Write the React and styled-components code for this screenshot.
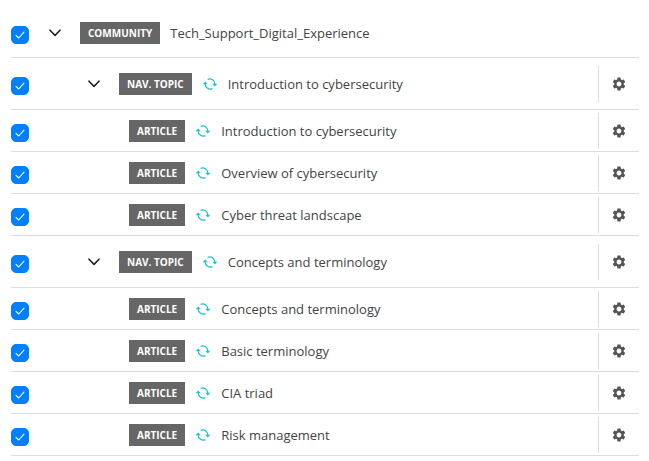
import React, { useState } from 'react';
import styled, { createGlobalStyle } from 'styled-components';
import { MdSettings } from 'react-icons/md';

const GlobalStyle = createGlobalStyle`
  body {
    margin: 0;
    background: #fff;
    color: #444;
    font-family: "Open Sans", "Noto Sans", sans-serif;
    font-size: 13px;
  }
`;

const items = [
  { id: 1, type: 'community', title: 'Tech_Support_Digital_Experience' },
  { id: 2, type: 'topic', title: 'Introduction to cybersecurity' },
  { id: 3, type: 'article', title: 'Introduction to cybersecurity' },
  { id: 4, type: 'article', title: 'Overview of cybersecurity' },
  { id: 5, type: 'article', title: 'Cyber threat landscape' },
  { id: 6, type: 'topic', title: 'Concepts and terminology' },
  { id: 7, type: 'article', title: 'Concepts and terminology' },
  { id: 8, type: 'article', title: 'Basic terminology' },
  { id: 9, type: 'article', title: 'CIA triad' },
  { id: 10, type: 'article', title: 'Risk management' },
];

const types = {
  community: { label: 'COMMUNITY', indent: 20, height: 48, expandable: true },
  topic: { label: 'NAV. TOPIC', indent: 59, height: 51, expandable: true, synced: true },
  article: { label: 'ARTICLE', indent: 100, height: 41, synced: true },
};

const Tree = styled.ul`
  list-style: none;
  margin: 0;
  padding: 9px 10px 0 11px;
`;

const Row = styled.li`
  display: flex;
  align-items: center;
  height: ${(props) => props.$height}px;
  border-bottom: 1px solid #dedede;
`;

const CheckWrap = styled.span`
  display: grid;
  place-items: center;
  flex: none;
  padding-top: 4px;

  > * {
    grid-area: 1 / 1;
  }

  svg {
    pointer-events: none;
  }
`;

const Checkbox = styled.input`
  appearance: none;
  width: 18px;
  height: 18px;
  margin: 0;
  border: 1px solid #007fff;
  border-radius: 5px;
  background: #fff;
  cursor: pointer;

  &:checked {
    background: #007fff;
  }
`;

const Content = styled.div`
  display: flex;
  align-items: center;
  flex: 1;
  min-width: 0;
  gap: 10px;
  padding-left: ${(props) => props.$indent}px;
`;

const IconButton = styled.button`
  display: grid;
  place-items: center;
  flex: none;
  padding: 0;
  border: none;
  background: none;
  color: #555;
  cursor: pointer;
`;

const Toggle = styled(IconButton)`
  width: 12px;
  height: 20px;
  margin-right: 9px;
  color: #222;
`;

const Badge = styled.span`
  flex: none;
  padding: 0 8px;
  background: #666;
  color: #fff;
  font-size: 10px;
  font-weight: 700;
  line-height: 22px;
`;

const Title = styled.label`
  line-height: 20px;
  white-space: nowrap;
`;

const Actions = styled.div`
  display: flex;
  align-items: center;
  flex: none;
  height: 36px;
  padding: 0 12px;
  border-left: 1px solid #dedede;
`;

const CheckIcon = () => (
  <svg width="12" height="10" viewBox="0 0 12 10" fill="none" stroke="#fff" strokeWidth="1.1" strokeLinecap="round" strokeLinejoin="round">
    <path d="M2 5.4 4.7 8 10 2.2" />
  </svg>
);

const ChevronIcon = () => (
  <svg width="12" height="8" viewBox="0 0 12 8" fill="none" stroke="currentColor" strokeWidth="1.6" strokeLinecap="round" strokeLinejoin="round">
    <path d="M1 1.2 6 6.4 11 1.2" />
  </svg>
);

const SyncIcon = () => (
  <svg width="16" height="12" viewBox="0 0 16 12" fill="none" stroke="#1fc3d8" strokeWidth="1.3">
    <path d="M5.6 1.4A5.1 5.1 0 0 1 12.8 6.2" />
    <path d="M10.4 10.6A5.1 5.1 0 0 1 3.2 5.8" />
    <path d="M10.2 5.8h5.2l-2.6 2.8zM5.8 6.2H.6L3.2 3.4z" fill="#1fc3d8" stroke="none" />
  </svg>
);

const TreeRow = ({ item }) => {
  const [checked, setChecked] = useState(true)
  const type = types[item.type]
  const fieldId = `item-${item.id}`

  return (
    <Row $height={type.height}>
      <CheckWrap>
        <Checkbox
          type="checkbox"
          id={fieldId}
          checked={checked}
          onChange={() => setChecked(!checked)}
        />
        {checked && <CheckIcon />}
      </CheckWrap>
      <Content $indent={type.indent}>
        {type.expandable && (
          <Toggle type="button" aria-label="Collapse" aria-expanded="true">
            <ChevronIcon />
          </Toggle>
        )}
        <Badge>{type.label}</Badge>
        {type.synced && <SyncIcon />}
        <Title htmlFor={fieldId}>{item.title}</Title>
      </Content>
      {type.synced && (
        <Actions>
          <IconButton type="button" aria-label="Settings">
            <MdSettings size={16} />
          </IconButton>
        </Actions>
      )}
    </Row>
  )
}

const App = () => (
  <>
    <GlobalStyle />
    <Tree>
      {items.map((item) => (
        <TreeRow key={item.id} item={item} />
      ))}
    </Tree>
  </>
)

export default App
